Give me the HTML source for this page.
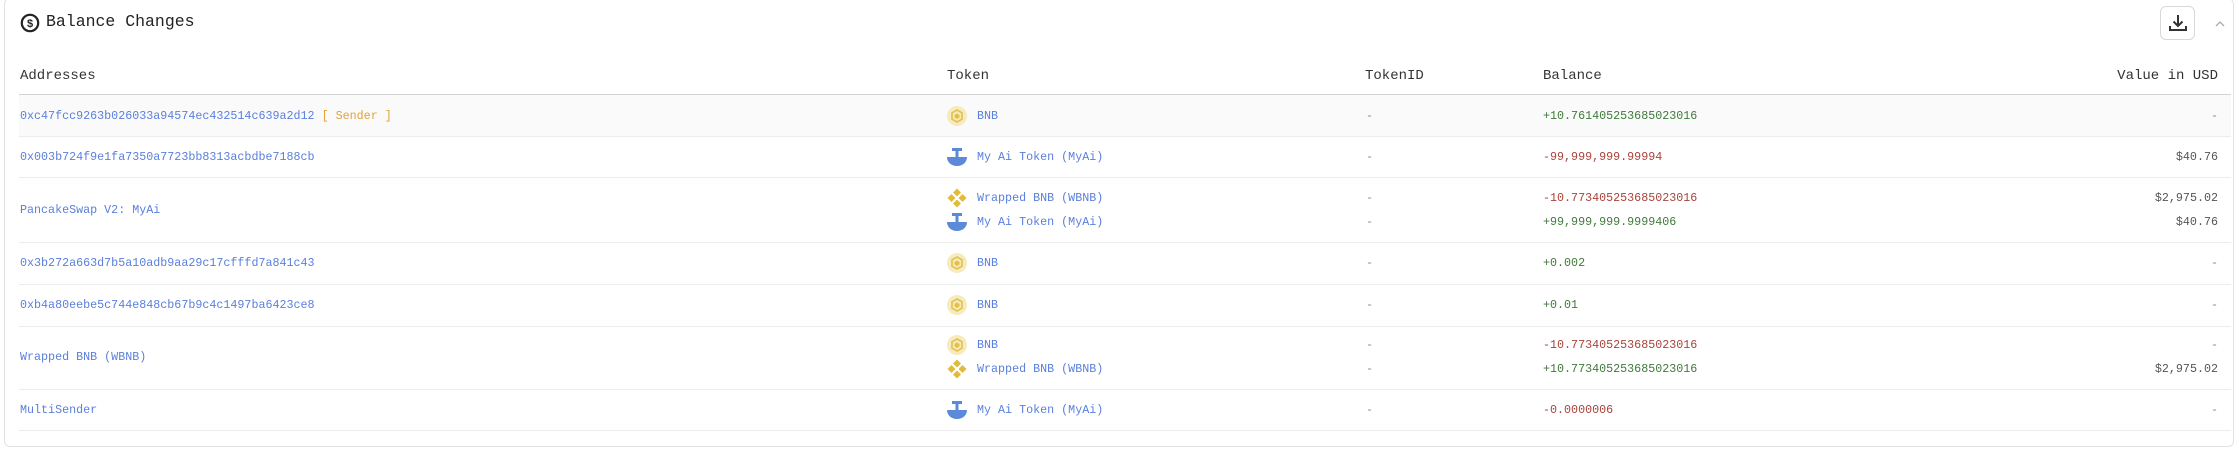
<!DOCTYPE html>
<html><head><meta charset="utf-8"><style>
*{box-sizing:border-box;margin:0;padding:0}
body{width:2239px;height:451px;background:#fff;font-family:"Liberation Mono",monospace;overflow:hidden;position:relative}
.card{position:absolute;left:4px;top:-2px;width:2230px;height:449px;border:1px solid #e2e2e2;border-radius:6px;background:#fff}
.title{position:absolute;left:46px;top:12px;font-size:16.5px;color:#222}
.hdr{position:absolute;top:68px;font-size:14px;color:#333}
.line{position:absolute;left:19px;width:2212px;height:1px;background:#ececec}
.t{position:absolute;font-size:11.7px;white-space:nowrap}
.a{color:#5a7fdc}.g{color:#3f7a3a}.r{color:#a8433a}.d{color:#888}.k{color:#555}
.ic{position:absolute;width:20px;height:20px}
</style></head><body>
<div class="card"></div>
<svg style="position:absolute;left:20px;top:13px" width="20" height="20" viewBox="0 0 20 20"><circle cx="10" cy="10" r="8.2" fill="none" stroke="#222" stroke-width="2.2"/><text x="10" y="14" font-size="11" font-family="Liberation Sans" font-weight="bold" text-anchor="middle" fill="#222">$</text></svg>
<div class="title">Balance Changes</div>
<div style="position:absolute;left:2160px;top:6px;width:35px;height:34px;border:1px solid #d8d8d8;border-radius:6px"></div>
<svg style="position:absolute;left:2167px;top:12px" width="22" height="22" viewBox="0 0 22 22" fill="none" stroke="#333" stroke-width="2"><path d="M11 3v11M6.5 9.5L11 14l4.5-4.5M3 14v4h16v-4"/></svg>
<svg style="position:absolute;left:2214px;top:20px" width="12" height="8" viewBox="0 0 12 8" fill="none" stroke="#aaa" stroke-width="1.3"><path d="M2 6l4-4 4 4"/></svg>
<div class="hdr" style="left:20px">Addresses</div>
<div class="hdr" style="left:947px">Token</div>
<div class="hdr" style="left:1365px">TokenID</div>
<div class="hdr" style="left:1543px">Balance</div>
<div class="hdr" style="right:21px">Value in USD</div>
<div style="position:absolute;left:19px;top:95px;width:2212px;height:42px;background:#fafafa"></div>
<div class="line" style="top:94px;background:#d4d4d4"></div>
<div class="line" style="top:136px"></div>
<div class="line" style="top:177px"></div>
<div class="line" style="top:242px"></div>
<div class="line" style="top:284px"></div>
<div class="line" style="top:326px"></div>
<div class="line" style="top:389px"></div>
<div class="line" style="top:430px"></div>
<svg width="0" height="0" style="position:absolute"><defs>
<g id="bnb"><circle cx="10" cy="10" r="10" fill="#f6ebbd"/><path d="M10 4l5 2.8v6.4L10 16l-5-2.8V6.8z" fill="none" stroke="#e2c04d" stroke-width="1.6"/><path d="M10 7.5l2.5 1.4v2.6L10 13l-2.5-1.5V8.9z" fill="#e2c04d"/></g>
<g id="wb"><path d="M10 0.5l4 4-4 4-4-4zM4.5 6l4 4-4 4-4-4zM15.5 6l4 4-4 4-4-4zM10 11.5l4 4-4 4-4-4z" fill="#e2bb3a"/><path d="M10 8l2 2-2 2-2-2z" fill="#fff"/></g>
<g id="my"><rect x="5" y="1" width="10" height="3" fill="#5b8ad8"/><rect x="8.5" y="3" width="3" height="8" fill="#5b8ad8"/><path d="M0 10h20c0 5-4 9-10 9S0 15 0 10z" fill="#5b8ad8"/></g>
</defs></svg>
<div class="t a" style="left:20px;top:109px">0xc47fcc9263b026033a94574ec432514c639a2d12 <span style="color:#e0a33a">[ Sender ]</span></div>
<svg class="ic" style="left:947px;top:106px"><use href="#bnb"/></svg><div class="t a" style="left:977px;top:109px">BNB</div>
<div class="t d" style="left:1366px;top:109px">-</div><div class="t g" style="left:1543px;top:109px">+10.761405253685023016</div><div class="t d" style="right:21px;top:109px">-</div>
<div class="t a" style="left:20px;top:150px">0x003b724f9e1fa7350a7723bb8313acbdbe7188cb</div>
<svg class="ic" style="left:947px;top:147px"><use href="#my"/></svg><div class="t a" style="left:977px;top:150px">My Ai Token (MyAi)</div>
<div class="t d" style="left:1366px;top:150px">-</div><div class="t r" style="left:1543px;top:150px">-99,999,999.99994</div><div class="t k" style="right:21px;top:150px">$40.76</div>
<div class="t a" style="left:20px;top:203px">PancakeSwap V2: MyAi</div>
<svg class="ic" style="left:947px;top:188px"><use href="#wb"/></svg><div class="t a" style="left:977px;top:191px">Wrapped BNB (WBNB)</div>
<svg class="ic" style="left:947px;top:212px"><use href="#my"/></svg><div class="t a" style="left:977px;top:215px">My Ai Token (MyAi)</div>
<div class="t d" style="left:1366px;top:191px">-</div><div class="t r" style="left:1543px;top:191px">-10.773405253685023016</div><div class="t k" style="right:21px;top:191px">$2,975.02</div>
<div class="t d" style="left:1366px;top:215px">-</div><div class="t g" style="left:1543px;top:215px">+99,999,999.9999406</div><div class="t k" style="right:21px;top:215px">$40.76</div>
<div class="t a" style="left:20px;top:256px">0x3b272a663d7b5a10adb9aa29c17cfffd7a841c43</div>
<svg class="ic" style="left:947px;top:253px"><use href="#bnb"/></svg><div class="t a" style="left:977px;top:256px">BNB</div>
<div class="t d" style="left:1366px;top:256px">-</div><div class="t g" style="left:1543px;top:256px">+0.002</div><div class="t d" style="right:21px;top:256px">-</div>
<div class="t a" style="left:20px;top:298px">0xb4a80eebe5c744e848cb67b9c4c1497ba6423ce8</div>
<svg class="ic" style="left:947px;top:295px"><use href="#bnb"/></svg><div class="t a" style="left:977px;top:298px">BNB</div>
<div class="t d" style="left:1366px;top:298px">-</div><div class="t g" style="left:1543px;top:298px">+0.01</div><div class="t d" style="right:21px;top:298px">-</div>
<div class="t a" style="left:20px;top:350px">Wrapped BNB (WBNB)</div>
<svg class="ic" style="left:947px;top:335px"><use href="#bnb"/></svg><div class="t a" style="left:977px;top:338px">BNB</div>
<svg class="ic" style="left:947px;top:359px"><use href="#wb"/></svg><div class="t a" style="left:977px;top:362px">Wrapped BNB (WBNB)</div>
<div class="t d" style="left:1366px;top:338px">-</div><div class="t r" style="left:1543px;top:338px">-10.773405253685023016</div><div class="t d" style="right:21px;top:338px">-</div>
<div class="t d" style="left:1366px;top:362px">-</div><div class="t g" style="left:1543px;top:362px">+10.773405253685023016</div><div class="t k" style="right:21px;top:362px">$2,975.02</div>
<div class="t a" style="left:20px;top:403px">MultiSender</div>
<svg class="ic" style="left:947px;top:400px"><use href="#my"/></svg><div class="t a" style="left:977px;top:403px">My Ai Token (MyAi)</div>
<div class="t d" style="left:1366px;top:403px">-</div><div class="t r" style="left:1543px;top:403px">-0.0000006</div><div class="t d" style="right:21px;top:403px">-</div>
</body></html>
